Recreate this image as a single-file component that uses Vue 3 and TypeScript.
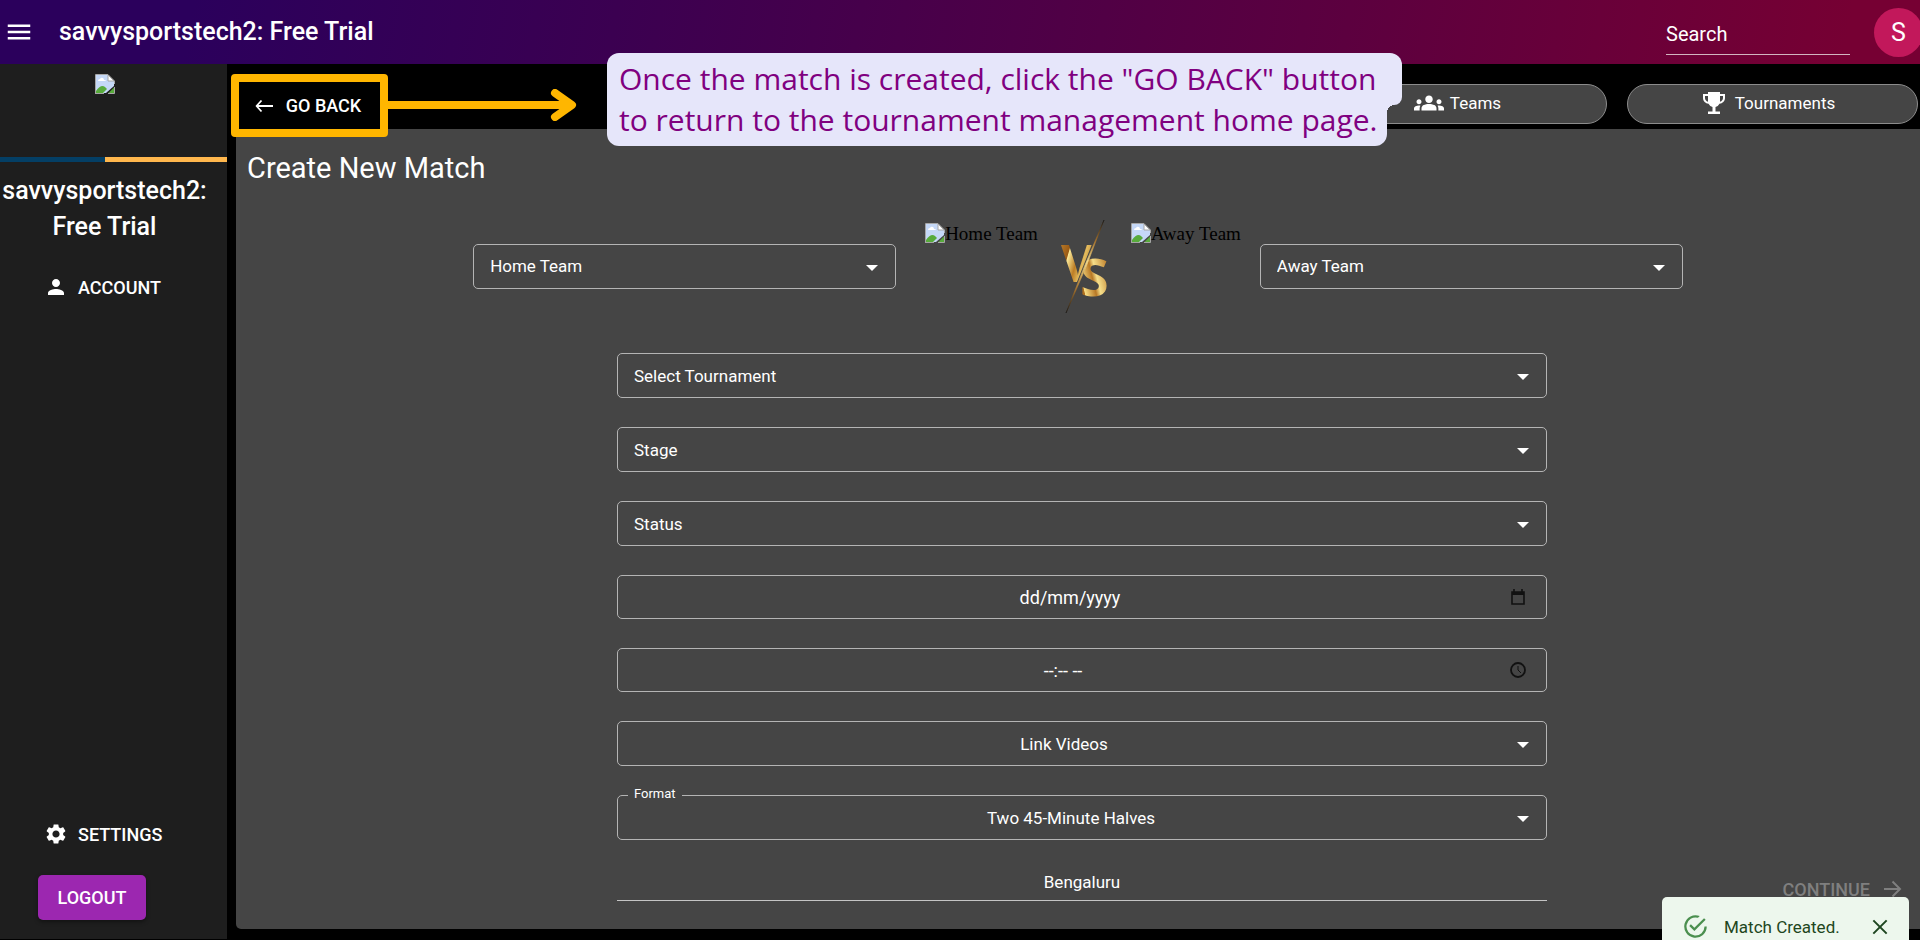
<script setup lang="ts">
import { ref } from 'vue'

interface SelectField {
  id: string
  label: string
}

const dropdowns: SelectField[] = [
  { id: 'tournament', label: 'Select Tournament' },
  { id: 'stage', label: 'Stage' },
  { id: 'status', label: 'Status' },
]

const search = ref('')
const matchDate = ref('')
const matchTime = ref('')
const location = ref('Bengaluru')
const toastOpen = ref(true)
</script>

<template>
  <svg class="defs" aria-hidden="true">
    <symbol id="broken-image" viewBox="0 0 20 20">
      <path d="M1 1h12l6 6v5L11 19H1z" fill="#c5d8f7" />
      <path d="M3 7q0-2 2-2 1-2 3-1 1 1 1 2 2 0 2 1z" fill="#fff" />
      <path d="M1 19v-2q5-7 9-4l2 2-4 4z" fill="#58ab3c" />
      <path d="M0.5 19.5V0.5H13L19.5 7V10M0 19.5H9" fill="none" stroke="#a6a6a6" />
      <path d="M13 1v6h6z" fill="#fff" stroke="#a6a6a6" />
      <path d="M19.500 13v6.500H13z" fill="#58ab3c" />
      <path d="M13 19.500h6.500V13" fill="none" stroke="#a6a6a6" />
    </symbol>
  </svg>

  <div class="app">
    <header class="topbar">
      <button class="menu" type="button" aria-label="Open menu">
        <svg viewBox="0 0 24 24" width="30" height="30"><path d="M3 18h18v-2H3zm0-5h18v-2H3zm0-7v2h18V6z" fill="currentColor" /></svg>
      </button>
      <h1 class="brand">savvysportstech2: Free Trial</h1>
      <input v-model="search" class="search" type="text" placeholder="Search" aria-label="Search" />
      <button class="avatar" type="button" aria-label="Profile">S</button>
    </header>

    <div class="body">
      <aside class="sidebar">
        <div class="logo">
          <svg width="20" height="20" role="img" aria-label="Club logo"><use href="#broken-image" /></svg>
        </div>
        <div class="stripe"></div>
        <h2 class="club">savvysportstech2: Free Trial</h2>
        <button class="nav account" type="button">
          <svg viewBox="0 0 24 24" width="24" height="24"><path d="M12 12c2.210 0 4-1.790 4-4s-1.790-4-4-4-4 1.790-4 4 1.790 4 4 4m0 2c-2.670 0-8 1.340-8 4v2h16v-2c0-2.660-5.330-4-8-4" fill="currentColor" /></svg>
          ACCOUNT
        </button>
        <button class="nav settings" type="button">
          <svg viewBox="0 0 24 24" width="24" height="24"><path d="M19.140 12.940c.04-.3.06-.61.06-.94 0-.32-.02-.64-.07-.94l2.030-1.580c.18-.14.23-.41.12-.61l-1.920-3.320c-.12-.22-.37-.29-.59-.22l-2.390.96c-.5-.38-1.030-.7-1.620-.94l-.36-2.540c-.04-.24-.24-.41-.48-.41h-3.840c-.24 0-.43.17-.47.41l-.36 2.540c-.59.24-1.130.57-1.620.94l-2.390-.96c-.22-.08-.47 0-.59.22L2.740 8.870c-.12.21-.08.47.12.61l2.030 1.580c-.05.3-.09.63-.09.94s.02.64.07.94l-2.030 1.580c-.18.14-.23.41-.12.61l1.920 3.320c.12.22.37.29.59.22l2.390-.96c.5.38 1.030.7 1.620.94l.36 2.540c.05.24.24.41.48.41h3.840c.24 0 .44-.17.47-.41l.36-2.540c.59-.24 1.130-.56 1.620-.94l2.390.96c.22.08.47 0 .59-.22l1.920-3.320c.12-.22.07-.47-.12-.61zM12 15.600c-1.980 0-3.600-1.620-3.600-3.600s1.620-3.600 3.600-3.600 3.600 1.620 3.600 3.600-1.620 3.600-3.600 3.600" fill="currentColor" /></svg>
          SETTINGS
        </button>
        <button class="logout" type="button">LOGOUT</button>
      </aside>

      <main class="main">
        <nav class="toolbar">
          <div class="back-wrap">
            <button class="back" type="button">
              <svg viewBox="0 0 24 24" width="24" height="24"><path d="M9.500 6.500L4.500 12 9.500 17.500M4.500 12H21" fill="none" stroke="currentColor" stroke-width="1.800" stroke-linejoin="round" /></svg>
              GO BACK
            </button>
            <svg class="arrow" viewBox="0 0 190 32" width="190" height="32" aria-hidden="true">
              <path d="M0 16H182M168 4L185 16L168 28" fill="none" stroke="#ffb600" stroke-width="8" stroke-linecap="round" stroke-linejoin="round" />
            </svg>
          </div>
          <button class="pill" type="button">
            <svg viewBox="0 0 24 24" width="30" height="30"><path d="M4 13c1.100 0 2-.9 2-2s-.9-2-2-2-2 .9-2 2 .9 2 2 2m1.130 1.100C4.760 14.040 4.390 14 4 14c-.99 0-1.930.21-2.780.58C.48 14.900 0 15.620 0 16.430V18h4.500v-1.610c0-.83.23-1.610.63-2.290M20 13c1.100 0 2-.9 2-2s-.9-2-2-2-2 .9-2 2 .9 2 2 2m4 3.430c0-.81-.48-1.530-1.220-1.850-.85-.37-1.790-.58-2.780-.58-.39 0-.76.04-1.130.1.400.68.630 1.460.630 2.290V18H24zm-7.760-2.780c-1.170-.52-2.610-.9-4.240-.9s-3.070.39-4.240.9C6.680 14.130 6 15.210 6 16.390V18h12v-1.610c0-1.180-.68-2.260-1.760-2.740M9 9c0 1.660 1.340 3 3 3s3-1.340 3-3-1.340-3-3-3-3 1.340-3 3" fill="currentColor" /></svg>
            Teams
          </button>
          <button class="pill wide" type="button">
            <svg viewBox="0 0 24 24" width="24" height="24"><path d="M6 1h12v2h5v4c0 3-2.500 5.500-5.500 5.800A6 6 0 0 1 13.500 16v4.500H18V23H6v-2.500h4.500V16a6 6 0 0 1-4-3.200C3.500 12.500 1 10 1 7V3h5zM3 5v2c0 1.700 1.200 3.200 3 3.700V5zm15 0v5.700c1.800-.5 3-2 3-3.700V5z" fill="currentColor" fill-rule="evenodd" /></svg>
            Tournaments
          </button>
          <p class="callout"><span class="first">Once the match is created, click the "GO BACK" button</span><span class="second">to return to the tournament management home page.</span></p>
        </nav>

        <section class="panel">
          <h2 class="title">Create New Match</h2>

          <div class="teams">
            <div class="field team">
              <select aria-label="Home Team"><option>Home Team</option></select>
              <svg class="caret" viewBox="0 0 12 6" width="12" height="6"><path d="M0 0h12L6 6z" fill="#fff" /></svg>
            </div>
            <div class="missing"><svg width="20" height="20"><use href="#broken-image" /></svg>Home Team</div>
            <svg class="versus" viewBox="0 0 48 96" width="48" height="96" role="img" aria-label="Versus">
              <defs>
                <linearGradient id="gold-v" x1="0" y1="0" x2="1" y2="0.600">
                  <stop offset="0" stop-color="#c58a35" />
                  <stop offset="0.320" stop-color="#9a5a14" />
                  <stop offset="0.340" stop-color="#fbe998" />
                  <stop offset="0.550" stop-color="#bd7d25" />
                  <stop offset="0.700" stop-color="#e3bb5d" />
                  <stop offset="1" stop-color="#a86b1b" />
                </linearGradient>
                <linearGradient id="gold-s" x1="0" y1="0.900" x2="1" y2="0.300">
                  <stop offset="0" stop-color="#a4631a" />
                  <stop offset="0.180" stop-color="#b0701e" />
                  <stop offset="0.200" stop-color="#f8df86" />
                  <stop offset="0.480" stop-color="#b87825" />
                  <stop offset="0.600" stop-color="#f6df8b" />
                  <stop offset="1" stop-color="#b87420" />
                </linearGradient>
                <linearGradient id="slash" x1="0" y1="1" x2="0" y2="0">
                  <stop offset="0" stop-color="#161412" />
                  <stop offset="0.250" stop-color="#a8722a" />
                  <stop offset="0.550" stop-color="#f3d98a" />
                  <stop offset="0.780" stop-color="#a8722a" />
                  <stop offset="1" stop-color="#161412" />
                </linearGradient>
                <clipPath id="left-half"><path d="M0 0H42L5 93H0z" /></clipPath>
                <clipPath id="right-half"><path d="M48 0H44L7 96H48z" /></clipPath>
              </defs>
              <g clip-path="url(#left-half)"><text x="1" y="63" class="letter" fill="url(#gold-v)">V</text></g>
              <g clip-path="url(#right-half)"><text x="20" y="77" class="letter" fill="url(#gold-s)">S</text></g>
              <path d="M6 94L25 46L44 1L26 48z" fill="url(#slash)" stroke="url(#slash)" stroke-width="0.600" />
            </svg>
            <div class="missing away"><svg width="20" height="20"><use href="#broken-image" /></svg>Away Team</div>
            <div class="field team">
              <select aria-label="Away Team"><option>Away Team</option></select>
              <svg class="caret" viewBox="0 0 12 6" width="12" height="6"><path d="M0 0h12L6 6z" fill="#fff" /></svg>
            </div>
          </div>

          <form class="form" @submit.prevent>
            <div v-for="item in dropdowns" :key="item.id" class="field">
              <select :id="item.id" :aria-label="item.label"><option>{{ item.label }}</option></select>
              <svg class="caret" viewBox="0 0 12 6" width="12" height="6"><path d="M0 0h12L6 6z" fill="#fff" /></svg>
            </div>
            <div class="field short">
              <input v-model="matchDate" class="date" type="text" placeholder="dd/mm/yyyy" aria-label="Match date" />
              <button class="picker" type="button" aria-label="Pick a date">
                <svg viewBox="0 0 16 16" width="16" height="16"><path d="M2 3h12v12H2zM4 0v3M12 0v3" fill="none" stroke="#111" stroke-width="1.600" /><path d="M2 3h12v3H2z" fill="#111" /></svg>
              </button>
            </div>
            <div class="field short">
              <input v-model="matchTime" class="time" type="text" placeholder="--:-- --" aria-label="Match time" />
              <button class="picker" type="button" aria-label="Pick a time">
                <svg viewBox="0 0 16 16" width="16" height="16"><path d="M8 4v4l3 3" fill="none" stroke="#111" stroke-width="1" /><circle cx="8" cy="8" r="7" fill="none" stroke="#111" stroke-width="1.800" /></svg>
              </button>
            </div>
            <div class="field">
              <select class="centered videos" aria-label="Link Videos"><option>Link Videos</option></select>
              <svg class="caret" viewBox="0 0 12 6" width="12" height="6"><path d="M0 0h12L6 6z" fill="#fff" /></svg>
            </div>
            <div class="field">
              <label class="tag" for="format">Format</label>
              <select id="format" class="centered"><option>Two 45-Minute Halves</option></select>
              <svg class="caret" viewBox="0 0 12 6" width="12" height="6"><path d="M0 0h12L6 6z" fill="#fff" /></svg>
            </div>
            <input v-model="location" class="location" type="text" aria-label="Location" />
          </form>

          <button class="continue" type="button" disabled>
            CONTINUE
            <svg viewBox="0 0 24 24" width="24" height="24"><path d="M12.500 4.500L20 12l-7.500 7.500M20 12H4" fill="none" stroke="currentColor" stroke-width="2" /></svg>
          </button>
        </section>
      </main>
    </div>

    <div v-if="toastOpen" class="toast" role="status">
      <svg viewBox="0 0 24 24" width="27" height="27"><path d="M20 12a8 8 0 1 1-5.800-7.700l1.570-1.570A10 10 0 1 0 22 12zM7.910 10.080L6.500 11.500 11 16 21 6l-1.410-1.420L11 13.170z" fill="#2e7d32" fill-opacity="0.850" /></svg>
      <span>Match Created.</span>
      <button type="button" aria-label="Close" @click="toastOpen = false">
        <svg viewBox="0 0 24 24" width="20" height="20"><path d="M4 4L20 20M20 4L4 20" stroke="currentColor" stroke-width="2.400" /></svg>
      </button>
    </div>
  </div>
</template>

<style>
body {
  margin: 0;
  background: #000;
}
</style>

<style scoped>
.defs {
  position: absolute;
  width: 0;
  height: 0;
}

.app {
  display: flex;
  flex-direction: column;
  min-height: 100vh;
  overflow: hidden;
  position: relative;
  color: #fff;
  background: #000;
  font-family: Roboto, "Liberation Sans", sans-serif;
  font-size: 17px;
}

.app * {
  box-sizing: border-box;
}

button,
input,
select {
  font: inherit;
  color: inherit;
  margin: 0;
  padding: 0;
  border: 0;
  background: none;
}

svg {
  flex: none;
  display: block;
}

.topbar {
  display: flex;
  align-items: center;
  height: 64px;
  padding-left: 4px;
  background: linear-gradient(100deg, #2b005c 10%, #3b0051 32%, #5c003f 70%, #760033 96%);
}

.menu {
  width: 30px;
  height: 30px;
}

.brand {
  flex: 1;
  margin: 0 0 0 25px;
  font-size: 25px;
  line-height: 36px;
  font-weight: 500;
}

.search {
  width: 184px;
  height: 39px;
  margin: 6px 24px 0 0;
  padding-bottom: 2px;
  border-bottom: 1px solid #d3b5c0;
  font-size: 20px;
}

.search::placeholder,
.field input::placeholder {
  color: #fff;
  opacity: 1;
}

.avatar {
  flex: none;
  width: 49px;
  height: 49px;
  margin-right: -3px;
  border-radius: 50%;
  background: #c2185b;
  font-size: 25px;
}

.body {
  flex: 1;
  display: flex;
}

.sidebar {
  flex: none;
  display: flex;
  flex-direction: column;
  align-items: flex-start;
  width: 227px;
  margin-bottom: 1px;
  background: #1e1e1e;
}

.logo {
  display: flex;
  justify-content: center;
  width: 210px;
  height: 93px;
  padding-top: 10px;
}

.stripe {
  width: 100%;
  height: 5px;
  background: linear-gradient(90deg, #043f65 105px, #ffb74d 105px);
}

.club {
  width: 209px;
  margin: 11px 0 0;
  font-size: 25px;
  line-height: 36px;
  font-weight: 500;
  text-align: center;
}

.nav {
  display: flex;
  align-items: center;
  gap: 10px;
  height: 44px;
  margin-left: 44px;
  font-size: 18px;
  font-weight: 500;
}

.account {
  margin-top: 20px;
}

.settings {
  margin-top: auto;
  margin-bottom: 19px;
}

.logout {
  width: 108px;
  height: 45px;
  margin: 0 0 19px 38px;
  border-radius: 5px;
  background: #9c27b0;
  box-shadow: 0 2px 4px rgba(0, 0, 0, 0.4);
  font-size: 18px;
  font-weight: 500;
}

.main {
  flex: 1;
  min-width: 0;
  display: flex;
  flex-direction: column;
  padding-bottom: 11px;
}

.toolbar {
  display: flex;
  align-items: flex-start;
  gap: 20px;
  height: 65px;
  padding: 10px 2px 0 4px;
  position: relative;
}

.back-wrap {
  position: relative;
  z-index: 2;
  margin-right: auto;
}

.back {
  display: flex;
  align-items: center;
  justify-content: center;
  gap: 10px;
  width: 157px;
  height: 63px;
  padding-right: 6px;
  border: 8px solid #ffb600;
  border-radius: 4px;
  background: #000;
  font-size: 18px;
  font-weight: 500;
}

.arrow {
  position: absolute;
  left: 156px;
  top: 15px;
}

.pill {
  display: flex;
  align-items: center;
  justify-content: center;
  gap: 6px;
  width: 291px;
  height: 40px;
  margin-top: 10px;
  padding: 0 8px 2px 0;
  border: 1px solid #8c8c8c;
  border-radius: 20px;
  background: #454545;
}

.pill.wide {
  gap: 9px;
}

.callout {
  position: absolute;
  z-index: 3;
  left: 380px;
  top: -11px;
  margin: 0;
  display: flex;
  flex-direction: column;
  align-items: flex-start;
  color: #800080;
  font-family: "Open Sans", sans-serif;
  font-size: 30px;
  line-height: 41px;
  white-space: nowrap;
}

.callout span {
  position: relative;
  background: #e6e6fa;
}

.callout .first {
  padding: 5px 26px 6px 12px;
  border-radius: 12px 12px 8px 0;
}

.callout .second {
  margin-top: -6px;
  padding: 0 10px 6px 12px;
  border-radius: 0 0 12px 12px;
}

.callout .second::after {
  content: "";
  position: absolute;
  left: 100%;
  top: 6px;
  width: 8px;
  height: 8px;
  background: radial-gradient(circle at 100% 100%, transparent 8px, #e6e6fa 8px);
}

.panel {
  flex: 1;
  position: relative;
  margin-left: 9px;
  padding-bottom: 16px;
  border-radius: 0 0 0 5px;
  background: #454545;
}

.title {
  margin: 0;
  padding: 21px 11px 0;
  font-size: 29px;
  line-height: 36px;
  font-weight: 400;
}

.teams {
  display: flex;
  align-items: center;
  justify-content: center;
  height: 94px;
  margin-top: 33px;
}

.versus {
  align-self: flex-start;
}

.field {
  position: relative;
  display: flex;
  height: 45px;
  border: 1px solid #b4b4b4;
  border-radius: 5px;
}

.field.short {
  height: 44px;
}

.field.team {
  width: 423px;
}

.field select,
.field input {
  appearance: none;
  flex: 1;
  min-width: 0;
  padding: 0 16px;
  outline: none;
}

.field option {
  color: #222;
}

.caret {
  position: absolute;
  right: 17px;
  top: 20px;
  pointer-events: none;
}

.missing {
  align-self: flex-start;
  display: flex;
  margin: 4px 22px 0 29px;
  color: #000;
  font-family: "Liberation Serif", serif;
  font-size: 19px;
  line-height: 22px;
}

.missing.away {
  margin: 4px 19px 0 23px;
}

.letter {
  font-family: "Open Sans", sans-serif;
  font-size: 52px;
  font-weight: 700;
}

.form {
  display: flex;
  flex-direction: column;
  gap: 29px;
  max-width: 938px;
  margin: 40px auto 0;
  padding-left: 8px;
}

.field .centered {
  padding: 0 38px 0 16px;
  text-align-last: center;
}

.field .videos {
  padding-right: 52px;
}

.field .date,
.field .time {
  text-align: center;
  font-size: 18px;
}

.field .date {
  padding: 0 0 0 32px;
}

.field .time {
  padding: 0 0 0 18px;
}

.picker {
  width: 56px;
  display: flex;
  align-items: center;
  justify-content: center;
}

.tag {
  position: absolute;
  left: 10px;
  top: -11px;
  padding: 0 6px;
  background: #454545;
  font-size: 13px;
  line-height: 18px;
}

.location {
  height: 32px;
  padding-bottom: 5px;
  border-bottom: 1px solid #c4c4c4;
  text-align: center;
  outline: none;
}

.continue {
  position: absolute;
  right: 16px;
  bottom: 28px;
  display: flex;
  align-items: center;
  gap: 10px;
  color: #7f7f7f;
  font-size: 18px;
  font-weight: 500;
}

.toast {
  position: absolute;
  z-index: 4;
  right: 11px;
  bottom: -16px;
  display: flex;
  align-items: center;
  width: 247px;
  height: 59px;
  padding: 0 19px 0 20px;
  border-radius: 5px;
  background: #edf7ed;
  color: #1e4620;
}

.toast span {
  flex: 1;
  margin-left: 15px;
}
</style>
